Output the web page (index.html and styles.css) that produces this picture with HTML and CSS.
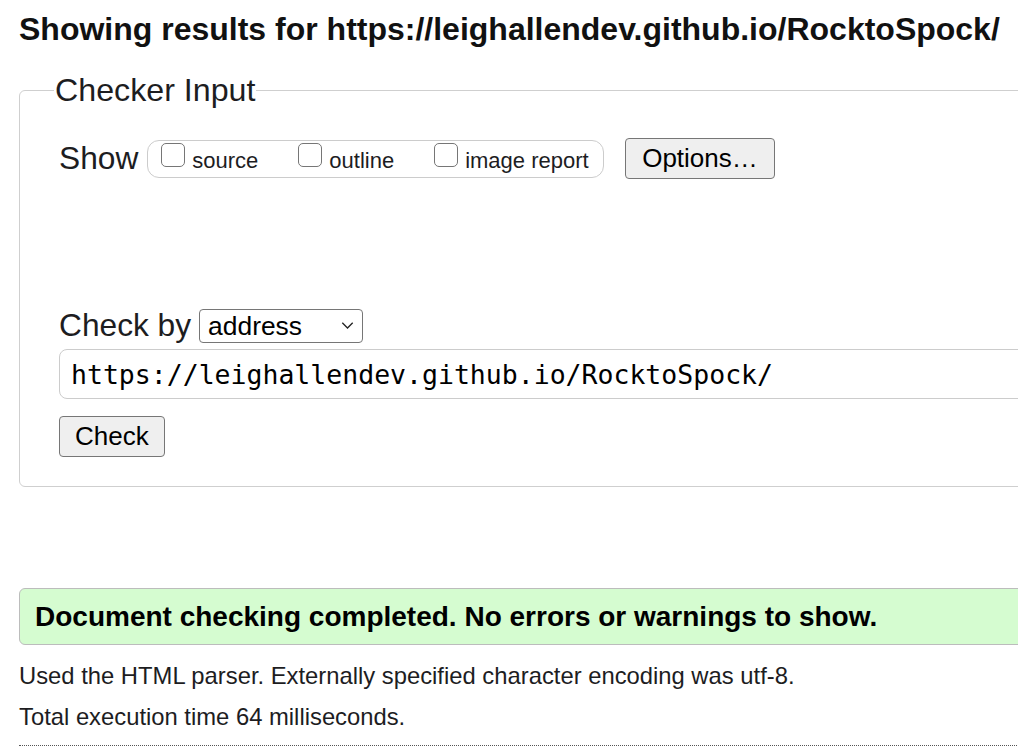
FILE: index.html
```html
<!DOCTYPE html>
<html lang="en">
<head>
<meta charset="utf-8">
<title>Nu Html Checker</title>
<link rel="stylesheet" href="styles.css">
</head>
<body>
<h1 class="results-title">Showing results for https://leighallendev.github.io/RocktoSpock/</h1>
<fieldset class="checker">
  <legend class="checker-legend">Checker Input</legend>
  <div class="show-row">
    <span class="row-label">Show</span>
    <div class="show-group">
      <label class="opt"><input type="checkbox" class="cb"><span class="opt-text">source</span></label>
      <label class="opt"><input type="checkbox" class="cb"><span class="opt-text">outline</span></label>
      <label class="opt"><input type="checkbox" class="cb"><span class="opt-text">image report</span></label>
    </div>
    <button class="btn btn-options" type="button">Options…</button>
  </div>
  <div class="checkby-row">
    <span class="row-label">Check by</span>
    <div class="select-wrap">
      <select class="select"><option>address</option></select>
      <svg class="chev" viewBox="0 0 12 7"><path d="M0.8 0.8L6 6L11.2 0.8" fill="none" stroke="#222" stroke-width="1.3"/></svg>
    </div>
  </div>
  <input class="url-input" type="text" value="https://leighallendev.github.io/RocktoSpock/">
  <button class="btn btn-check" type="button">Check</button>
</fieldset>
<p class="success">Document checking completed. No errors or warnings to show.</p>
<p class="info">Used the HTML parser. Externally specified character encoding was utf-8.</p>
<p class="info info-second">Total execution time 64 milliseconds.</p>
<hr class="dotted">
</body>
</html>
```
FILE: styles.css
```css
html {
  overflow: hidden;
  background: #fff;
}
body {
  margin: 0;
  padding-left: 19px;
  width: 1200px;
  font-family: "Liberation Sans", Arial, sans-serif;
  color: #1d1d1f;
}
.results-title {
  margin: 11px 0 0;
  font-size: 32px;
  font-weight: bold;
  line-height: normal;
  color: #111;
}
.checker {
  margin: 24px 0 0;
  padding: 29px 0 29px 39px;
  border: 1px solid #cfcfcf;
  border-radius: 6px;
  min-width: 0;
}
.checker-legend {
  font-size: 32.2px;
  line-height: normal;
  padding: 0 1px;
  margin-left: -5px;
}
.show-row {
  display: flex;
  align-items: center;
}
.row-label {
  font-size: 31.7px;
  line-height: normal;
}
.show-group {
  display: flex;
  align-items: flex-start;
  gap: 40px;
  margin-left: 9px;
  height: 38px;
  box-sizing: border-box;
  border: 1px solid #cccccc;
  border-radius: 12px;
  padding: 1px 14px 0 13px;
}
.opt {
  display: flex;
  align-items: flex-start;
  gap: 7px;
}
.cb {
  -webkit-appearance: none;
  appearance: none;
  box-sizing: border-box;
  width: 24px;
  height: 24px;
  margin: 1px 0 0;
  border: 1.5px solid #767676;
  border-radius: 5px;
  background: #fff;
}
.opt-text {
  font-size: 22px;
  line-height: normal;
  margin-top: 6px;
}
.btn {
  font-family: "Liberation Sans", Arial, sans-serif;
  background: #efefef;
  border: 1px solid #767676;
  border-radius: 4px;
  color: #000;
  margin: 0;
  height: 41px;
  font-size: 26px;
  padding: 0 15px;
}
.btn-options {
  margin-left: 21px;
  padding: 0 16.5px;
}
.checkby-row {
  display: flex;
  align-items: center;
  margin-top: 128px;
}
.select-wrap {
  position: relative;
  margin-left: 8px;
}
.select {
  -webkit-appearance: none;
  appearance: none;
  display: block;
  width: 164px;
  height: 34px;
  box-sizing: border-box;
  border: 1px solid #767676;
  border-radius: 4px;
  background: #fff;
  color: #000;
  font-family: "Liberation Sans", Arial, sans-serif;
  font-size: 26.4px;
  padding: 0 0 0 8px;
  margin: 0;
}
.chev {
  position: absolute;
  left: 142px;
  top: 13px;
  width: 13px;
  height: 7px;
  pointer-events: none;
}
.url-input {
  display: block;
  width: 100%;
  box-sizing: border-box;
  height: 50px;
  margin: 5px 0 0;
  border: 1px solid #cccccc;
  border-radius: 8px;
  padding: 0 11px;
  font-family: "DejaVu Sans Mono", monospace;
  font-size: 26.5px;
  color: #000;
  background: #fff;
}
.btn-check {
  display: block;
  margin-top: 17px;
}
.success {
  margin: 101px 0 0;
  height: 57px;
  box-sizing: border-box;
  display: flex;
  align-items: center;
  padding-left: 15px;
  border: 1px solid #bcbcbc;
  border-radius: 6px;
  background: #d5fcd0;
  font-weight: bold;
  font-size: 28px;
  color: #000;
}
.info {
  margin: 17px 0 0;
  font-size: 23.8px;
  line-height: normal;
}
.info-second {
  margin-top: 13px;
}
.dotted {
  margin: 14px 0 0;
  height: 0;
  border: 0;
  border-top: 1px dotted #555;
}
```
